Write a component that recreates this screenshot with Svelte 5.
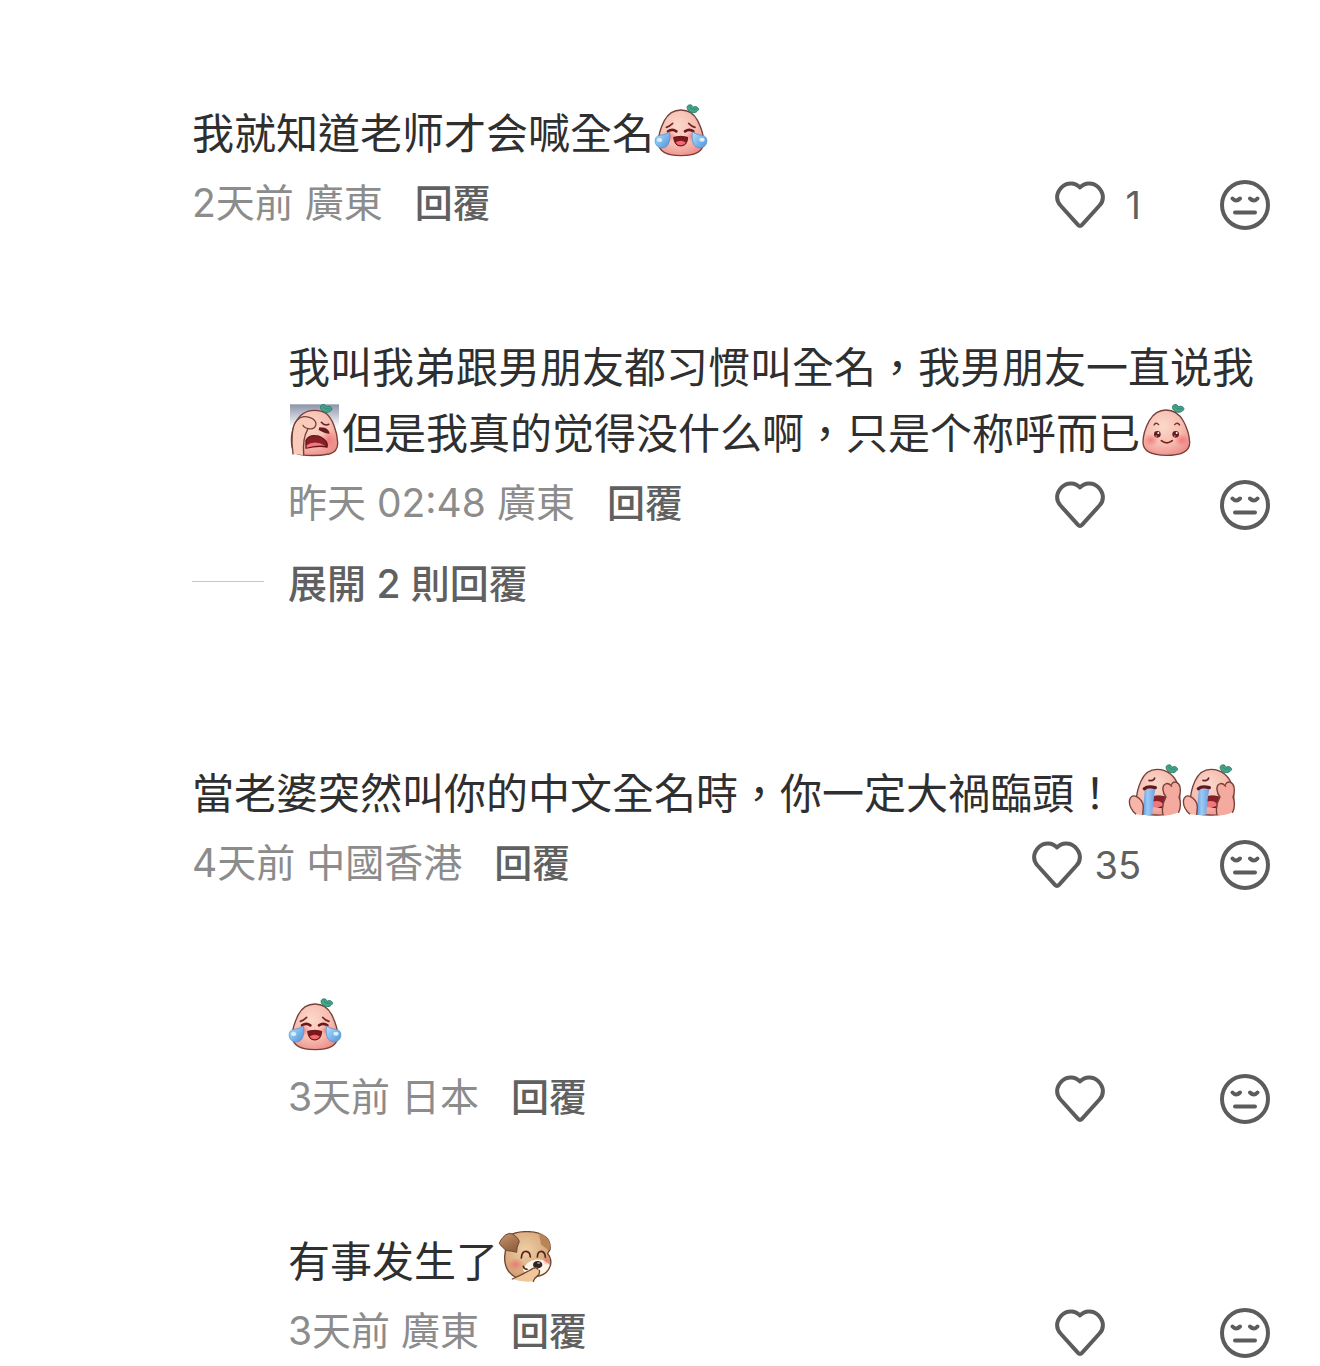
<script>
    const threads = [
        {
            text: ['我就知道老师才会喊全名', { emoji: 'joy' }],
            date: '2天前',
            place: '廣東',
            likes: 1,
            more: 2,
            replies: [
                {
                    text: [
                        '我叫我弟跟男朋友都习惯叫全名，我男朋友一直说我',
                        { emoji: 'facepalm' },
                        '但是我真的觉得没什么啊，只是个称呼而已',
                        { emoji: 'smile' }
                    ],
                    date: '昨天 02:48',
                    place: '廣東',
                    likes: 0
                }
            ]
        },
        {
            text: ['當老婆突然叫你的中文全名時，你一定大禍臨頭！ ', { emoji: 'cry' }, { emoji: 'cry' }],
            date: '4天前',
            place: '中國香港',
            likes: 35,
            more: 0,
            replies: [
                { text: [{ emoji: 'joy' }], date: '3天前', place: '日本', likes: 0 },
                { text: ['有事发生了', { emoji: 'dog' }], date: '3天前', place: '廣東', likes: 0 }
            ]
        }
    ];
</script>

<svg class="defs" aria-hidden="true">
    <defs>
        <radialGradient id="skin" cx="0.42" cy="0.35" r="0.7">
            <stop offset="0" stop-color="#fbd9cb" />
            <stop offset="0.6" stop-color="#f6bdb0" />
            <stop offset="1" stop-color="#ee8f8c" />
        </radialGradient>
        <radialGradient id="blush">
            <stop offset="0" stop-color="#f2646e" stop-opacity="0.7" />
            <stop offset="1" stop-color="#f2646e" stop-opacity="0" />
        </radialGradient>
        <linearGradient id="sky" x1="0" y1="0" x2="0" y2="1">
            <stop offset="0" stop-color="#8b93a8" />
            <stop offset="1" stop-color="#ffffff" />
        </linearGradient>
        <linearGradient id="tear" x1="0" y1="0" x2="1" y2="1">
            <stop offset="0" stop-color="#b9e2fb" />
            <stop offset="0.6" stop-color="#74b2ea" />
            <stop offset="1" stop-color="#558fd3" />
        </linearGradient>
        <linearGradient id="stream" x1="0" y1="0" x2="1" y2="0">
            <stop offset="0" stop-color="#5d93dc" />
            <stop offset="0.4" stop-color="#9cc9f3" />
            <stop offset="1" stop-color="#6aa0e2" />
        </linearGradient>
        <radialGradient id="fur" cx="0.45" cy="0.4" r="0.65">
            <stop offset="0" stop-color="#efcfa8" />
            <stop offset="1" stop-color="#cf9c6d" />
        </radialGradient>
        <linearGradient id="ear" x1="0" y1="0" x2="0.6" y2="1">
            <stop offset="0" stop-color="#c9976a" />
            <stop offset="1" stop-color="#8f5f40" />
        </linearGradient>
    </defs>
</svg>

{#snippet leaf()}
    <path
        d="M137 50C127 43 127 31 136 30C143 28 146 34 148 37C153 32 163 36 164 43C160 52 148 56 137 50Z"
        fill="#44a58a"
        stroke="#2b7a69"
        stroke-width="3"
    />
    <path d="M137 35C140 43 149 44 158 42" fill="none" stroke="#2b7a69" stroke-width="2" />
{/snippet}

{#snippet emoji(name)}
    {#if name === 'joy'}
        <svg class="emoji" viewBox="30 24 162 162" role="img" aria-label="笑哭">
            <path
                d="M111 45C87 45 71 58 61 77C50 99 42 122 43 144C45 173 72 182 111 182C150 182 177 173 179 144C180 122 172 99 161 77C151 58 135 45 111 45Z"
                fill="url(#skin)"
                stroke="#764039"
                stroke-width="4"
            />
            {@render leaf()}
            <ellipse cx="76" cy="124" rx="21" ry="17" fill="url(#blush)" />
            <ellipse cx="146" cy="124" rx="21" ry="17" fill="url(#blush)" />
            <g fill="none" stroke="#7c2727" stroke-width="5" stroke-linecap="round">
                <path d="M67 97Q77 94 86 85" />
                <path d="M134 85Q142 94 153 97" />
            </g>
            <g fill="none" stroke="#6b171d" stroke-width="8" stroke-linecap="round">
                <path d="M72 109Q85 100 97 109" />
                <path d="M123 109Q136 100 148 109" />
            </g>
            <path d="M89 127Q110 121 131 127Q130 153 110 153Q91 153 89 127Z" fill="#7f171e" stroke="#681318" stroke-width="3" />
            <path d="M95 142Q110 132 125 142Q121 151 110 151Q99 151 95 142Z" fill="#f16d70" />
            <g fill="url(#tear)" stroke="#4d8bc8" stroke-width="2">
                <path d="M76 110C80 132 77 158 54 159C39 159 31 145 34 132C39 115 61 125 76 110Z" />
                <path d="M146 110C142 132 145 158 168 159C183 159 191 145 188 132C183 115 161 125 146 110Z" />
            </g>
            <ellipse cx="47" cy="135" rx="8" ry="6" fill="#d9f1ff" />
            <ellipse cx="174" cy="134" rx="8" ry="6" fill="#d9f1ff" />
        </svg>
    {:else if name === 'facepalm'}
        <svg class="emoji" viewBox="27 24 162 162" role="img" aria-label="捂臉">
            <rect x="33" y="28" width="147" height="68" fill="url(#sky)" />
            <path
                d="M107 46C79 46 60 60 48 86C36 111 35 132 39 156Q43 177 65 179C92 183 128 181 151 177Q178 170 176 142C174 109 162 73 141 55Q127 46 107 46Z"
                fill="url(#skin)"
                stroke="#764039"
                stroke-width="4"
            />
            <g transform="translate(-5 -1)">{@render leaf()}</g>
            <ellipse cx="150" cy="134" rx="24" ry="30" fill="url(#blush)" />
            <path d="M81 136Q90 121 107 122Q127 122 140 138Q147 148 144 156Q119 151 81 159Z" fill="#8a1f27" stroke="#64161c" stroke-width="4" />
            <path d="M83 151Q106 134 139 152Q113 149 83 158Z" fill="#f27881" />
            <path d="M121 97L137 98Q150 102 152 116Q137 116 119 105Z" fill="#671b20" />
            <path d="M127 82Q137 94 149 88" fill="none" stroke="#64232a" stroke-width="5" stroke-linecap="round" />
            <path
                d="M42 177C36 136 38 91 57 76Q72 60 91 67Q111 73 111 88Q107 105 89 101Q82 102 76 123Q76 147 72 180Z"
                fill="#f8cbbb"
            />
            <path
                d="M42 177C36 136 38 91 54 76Q68 60 91 67Q111 73 111 88Q107 105 89 101Q76 100 72 91M86 103Q70 130 74 180"
                fill="none"
                stroke="#764039"
                stroke-width="4"
                stroke-linecap="round"
            />
        </svg>
    {:else if name === 'smile'}
        <svg class="emoji" viewBox="30 24 162 162" role="img" aria-label="微笑">
            <path
                d="M108 45C84 45 69 58 58 77C46 99 39 122 39 142C39 172 68 181 109 181C150 181 180 172 179 142C178 120 171 98 160 78C148 57 132 45 108 45Z"
                fill="url(#skin)"
                stroke="#764039"
                stroke-width="4"
            />
            <g transform="translate(-2 -1)">{@render leaf()}</g>
            <ellipse cx="63" cy="135" rx="22" ry="19" fill="url(#blush)" />
            <ellipse cx="155" cy="135" rx="22" ry="19" fill="url(#blush)" />
            <g fill="none" stroke="#7a3028" stroke-width="4" stroke-linecap="round">
                <path d="M72 90Q78 80 86 89" />
                <path d="M134 89Q142 80 149 90" />
            </g>
            <circle cx="82" cy="118" r="10" fill="#601d1f" />
            <circle cx="137" cy="118" r="10" fill="#601d1f" />
            <circle cx="85" cy="114" r="3" fill="#ffffff" />
            <circle cx="140" cy="114" r="3" fill="#ffffff" />
            <circle cx="79" cy="123" r="3" fill="#d35b50" />
            <circle cx="134" cy="123" r="3" fill="#d35b50" />
            <path d="M94 137Q110 150 127 137" fill="none" stroke="#7a211f" stroke-width="5" stroke-linecap="round" />
        </svg>
    {:else if name === 'cry'}
        <svg class="emoji" viewBox="30 24 162 162" role="img" aria-label="大哭">
            <path
                d="M117 43C94 43 78 58 69 78C59 100 52 128 56 158Q60 180 112 180Q168 182 180 162Q190 134 182 98C174 64 149 43 117 43Z"
                fill="url(#skin)"
                stroke="#764039"
                stroke-width="4"
            />
            <g transform="translate(15 0)">{@render leaf()}</g>
            <path d="M93 76Q107 79 110 69" fill="none" stroke="#62252a" stroke-width="5" stroke-linecap="round" />
            <path d="M102 126Q125 118 149 129Q145 150 130 158L102 152Z" fill="#8a1f27" stroke="#65161c" stroke-width="3" />
            <path d="M103 140Q127 132 138 151Q122 160 102 156Z" fill="#f1777c" />
            <path d="M80 103H112Q106 132 103 178Q88 184 73 178Q78 146 80 103Z" fill="url(#stream)" />
            <path d="M79 101Q90 92 112 98" fill="none" stroke="#5d1b24" stroke-width="10" stroke-linecap="round" />
            <path
                d="M54 178C40 166 34 152 34 139C35 124 45 120 54 124C68 130 76 144 76 156L74 180Z"
                fill="#f7b6a9"
            />
            <path
                d="M54 178C40 166 34 152 34 139C35 124 45 120 54 124C68 130 76 144 76 156L74 180"
                fill="none"
                stroke="#764039"
                stroke-width="4"
            />
            <path
                d="M135 179Q129 152 144 126C133 112 131 92 142 87Q152 82 161 88C166 76 182 80 186 96Q189 112 183 126Q192 150 182 172Q159 184 135 179Z"
                fill="#f5aa9f"
            />
            <path
                d="M135 179Q129 152 144 126C133 112 131 92 142 87Q152 82 161 94M161 88C166 76 182 80 186 96Q189 112 183 126Q192 150 182 172"
                fill="none"
                stroke="#764039"
                stroke-width="4"
                stroke-linecap="round"
            />
        </svg>
    {:else}
        <svg class="emoji" viewBox="33 24 162 162" role="img" aria-label="偷笑狗">
            <path
                d="M61 41Q85 25 119 26Q154 25 176 42Q192 56 189 80Q183 88 182 92Q194 106 191 125Q183 155 149 161L91 165Q51 148 53 100Z"
                fill="url(#fur)"
                stroke="#70452f"
                stroke-width="4"
            />
            <path d="M108 141Q120 112 145 110Q178 108 188 127Q180 152 151 157Q118 158 108 141Z" fill="#fff4e8" />
            <ellipse cx="86" cy="124" rx="24" ry="19" fill="url(#blush)" />
            <ellipse cx="179" cy="113" rx="12" ry="14" fill="url(#blush)" />
            <path d="M68 31Q55 33 47 44Q38 54 37 62C44 70 56 86 72 84Q82 86 89 88Q88 74 97 55Q88 35 68 31Z" fill="url(#ear)" stroke="#70452f" stroke-width="3" />
            <path d="M156 30Q184 40 189 62Q192 76 185 82Q172 73 162 64Q158 46 156 30Z" fill="#b98558" />
            <g fill="none" stroke="#5b251e" stroke-width="5" stroke-linecap="round">
                <path d="M103 105Q105 84 117 85Q129 86 130 102" />
                <path d="M151 102Q152 84 164 85Q175 88 175 103" />
                <path d="M109 130Q111 138 120 139" />
            </g>
            <ellipse cx="152" cy="125" rx="14" ry="11" fill="#302428" />
            <ellipse cx="155" cy="120" rx="5" ry="3" fill="#98888a" />
            <path d="M76 168Q108 154 133 139Q150 128 157 139Q162 149 152 157Q142 164 139 175Q108 179 76 168Z" fill="#f0c79a" />
            <path d="M76 168Q108 154 133 139Q146 130 152 138M157 142Q160 154 150 160Q141 166 139 175" fill="none" stroke="#70452f" stroke-width="4" stroke-linecap="round" />
        </svg>
    {/if}
{/snippet}

{#snippet comment(item)}
    <article>
        <p class="text">{#each item.text as part}{#if part.emoji}{@render emoji(part.emoji)}{:else}{part}{/if}{/each}</p>
        <div class="meta">
            <span class="date">{item.date} {item.place}</span>
            <button class="reply">回覆</button>
            <div class="actions">
                <button class="like" aria-label="讚好">
                    <svg class="icon" viewBox="0 0 50 50" aria-hidden="true">
                        <path d="M25 7.500C20.500 2.500 12 2 6.800 7.200C.8 13.200.8 20.500 5.500 25.500L23 44.800Q25 47 27 44.800L44.500 25.500C49.200 20.500 49.200 13.200 43.200 7.200C38 2 29.500 2.500 25 7.500Z" />
                    </svg>
                    <span class="count">{item.likes || ''}</span>
                </button>
                <button class="dislike" aria-label="不喜歡">
                    <svg class="icon" viewBox="0 0 50 50" aria-hidden="true">
                        <circle cx="25" cy="25" r="23" />
                        <path d="M12.500 18.500Q16 22.500 20 18.500M30 18.500Q34 22.500 37.500 18.500M15 32.500H35" />
                    </svg>
                </button>
            </div>
        </div>
    </article>
{/snippet}

<main>
    {#each threads as thread}
        <section>
            {@render comment(thread)}
            <div class="replies">
                {#each thread.replies as reply}
                    {@render comment(reply)}
                {/each}
            </div>
            {#if thread.more}
                <button class="more">展開 {thread.more} 則回覆</button>
            {/if}
        </section>
    {/each}
</main>

<style>
    :global(body) {
        background: #ffffff;
    }

    main {
        display: flex;
        flex-direction: column;
        gap: 144px;
        padding: 101px 50px 0 192px;
        font-family: Inter, "Noto Sans CJK TC", sans-serif;
        color: #2f2f2f;
    }

    .defs {
        position: absolute;
        width: 0;
        height: 0;
    }

    .replies {
        display: flex;
        flex-direction: column;
        gap: 102px;
        padding: 102px 0 0 96px;
    }

    .text {
        margin: 0;
        font-size: 42px;
        line-height: 66px;
        white-space: pre-wrap;
    }

    .emoji {
        width: 54px;
        height: 54px;
        vertical-align: 0;
        margin: -8px 0;
    }

    .meta {
        display: flex;
        align-items: center;
        height: 66px;
        font-size: 38px;
        color: #8c8c8c;
    }

    .date {
        font-size: 39px;
    }

    button {
        border: 0;
        padding: 0;
        background: none;
        font: inherit;
        color: #606060;
        cursor: pointer;
    }

    .reply {
        margin-left: 32px;
        font-weight: 500;
    }

    .actions {
        display: flex;
        align-items: center;
        gap: 79px;
        margin-left: auto;
        padding-top: 10px;
    }

    .like {
        display: flex;
        align-items: center;
        gap: 12px;
    }

    .count {
        min-width: 24px;
        text-align: right;
    }

    .icon {
        display: block;
        width: 50px;
        height: 50px;
        fill: none;
        stroke: #5c5c5c;
        stroke-width: 4;
        stroke-linecap: round;
        stroke-linejoin: round;
    }

    .more {
        display: flex;
        align-items: center;
        gap: 24px;
        height: 72px;
        margin-top: 12px;
        font-size: 39px;
        font-weight: 500;
    }

    .more::before {
        content: "";
        width: 72px;
        height: 1px;
        background: #c8c8c8;
    }
</style>
